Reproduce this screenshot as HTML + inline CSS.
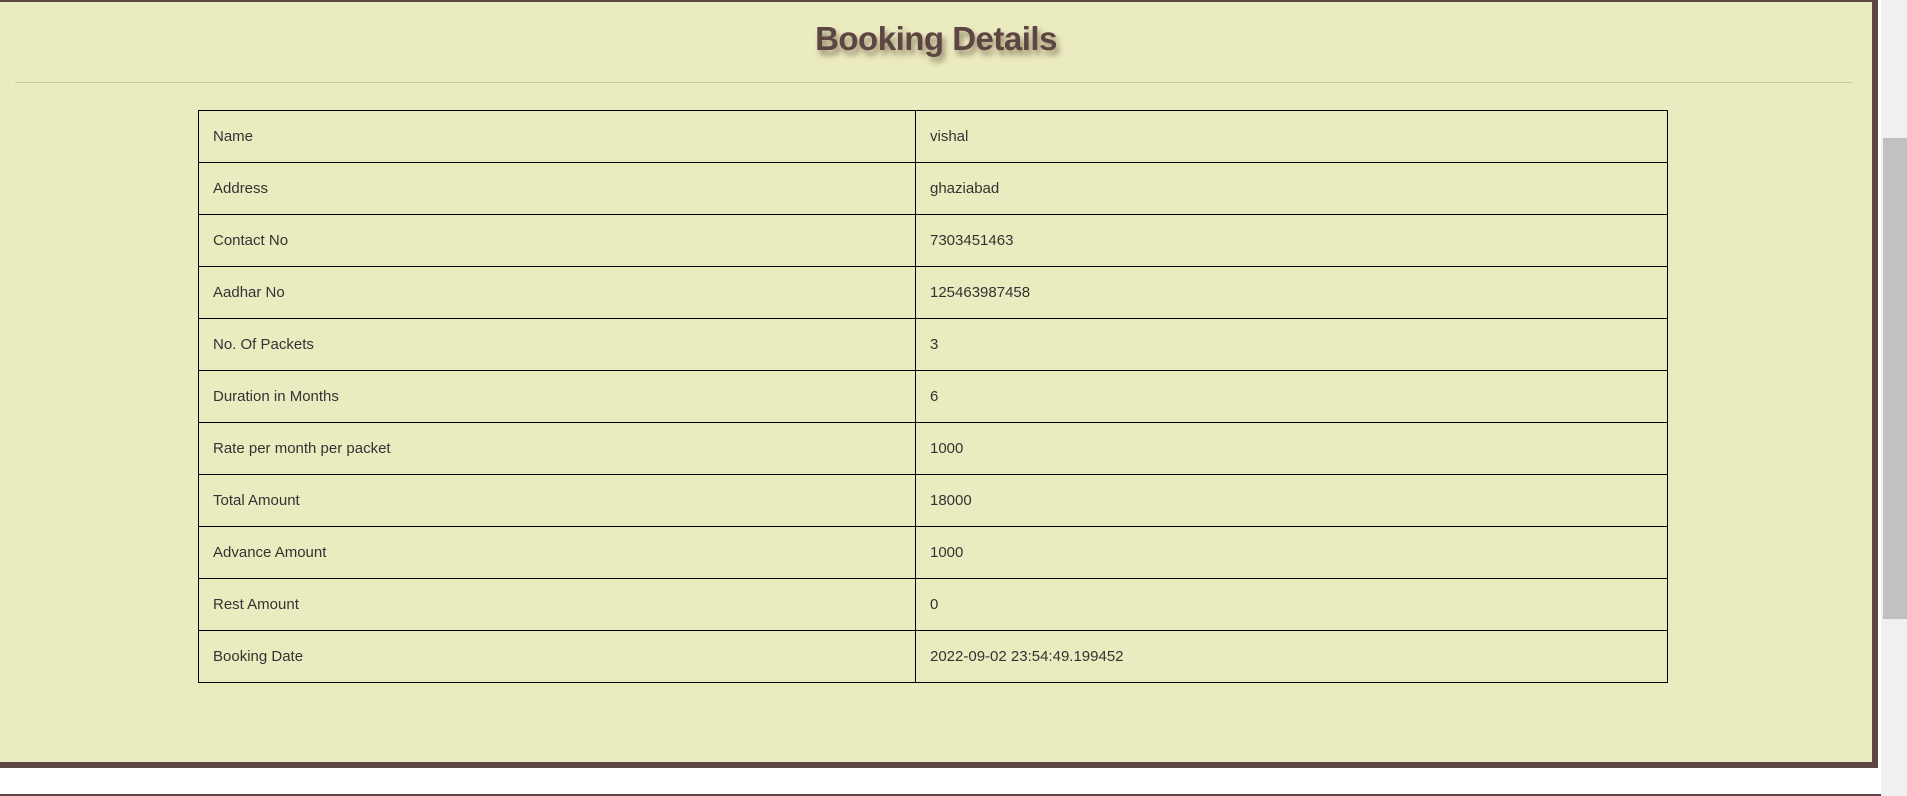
<!DOCTYPE html>
<html><head><meta charset="utf-8"><style>
html,body{margin:0;padding:0;width:1907px;height:796px;overflow:hidden;background:#fff;}
.scroll{position:absolute;left:1881px;top:0;width:26px;height:796px;background:#f0f0f0;}
.thumb{position:absolute;left:1883px;top:138px;width:24px;height:481px;background:#c1c1c1;}
.panel{position:absolute;left:0;top:0;width:1872px;height:760px;background:#ebebc0;border-top:2px solid #5d4541;border-right:6px solid #5d4541;border-bottom:6px solid #5d4541;}
h1{position:absolute;left:0;width:1872px;top:20px;margin:0;text-align:center;font-family:"Liberation Sans",sans-serif;font-weight:bold;font-size:33px;color:#5d4541;text-shadow:3px 5px 6px rgba(80,60,40,0.55);letter-spacing:-0.5px;}
.hr{position:absolute;left:15px;width:1837px;top:82px;height:1px;background:#c8c8a4;}
table{position:absolute;left:198px;top:110px;width:1470px;border-collapse:collapse;font-family:"Liberation Sans",sans-serif;font-size:15px;color:#333;}
td{border:1px solid #000;height:52px;padding:0 0 0 14px;box-sizing:border-box;}
td:first-child{width:717px;}
.bot{position:absolute;left:0;top:794px;width:1881px;height:2px;background:#5d4541;}
</style></head><body>
<div class="panel"></div>
<h1>Booking Details</h1>
<div class="hr"></div>
<table>
<tr><td>Name</td><td>vishal</td></tr>
<tr><td>Address</td><td>ghaziabad</td></tr>
<tr><td>Contact No</td><td>7303451463</td></tr>
<tr><td>Aadhar No</td><td>125463987458</td></tr>
<tr><td>No. Of Packets</td><td>3</td></tr>
<tr><td>Duration in Months</td><td>6</td></tr>
<tr><td>Rate per month per packet</td><td>1000</td></tr>
<tr><td>Total Amount</td><td>18000</td></tr>
<tr><td>Advance Amount</td><td>1000</td></tr>
<tr><td>Rest Amount</td><td>0</td></tr>
<tr><td>Booking Date</td><td>2022-09-02 23:54:49.199452</td></tr>
</table>
<div class="scroll"></div><div class="thumb"></div>
<div class="bot"></div>
</body></html>
